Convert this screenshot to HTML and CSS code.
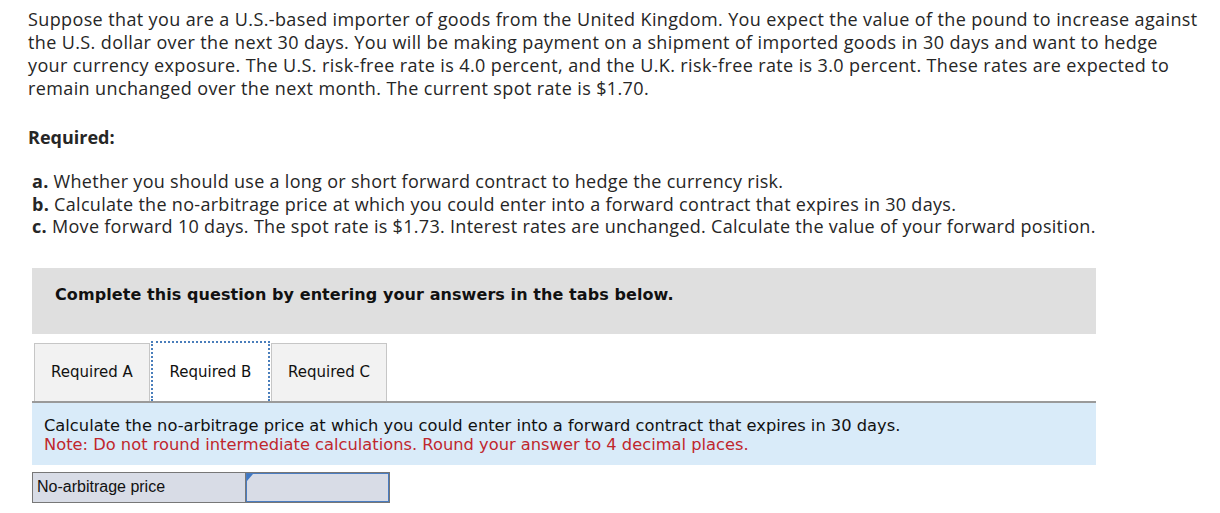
FILE: index.html
```html
<!DOCTYPE html>
<html>
<head>
<meta charset="utf-8">
<link rel="stylesheet" href="styles.css">
</head>
<body>
<div class="page">
  <p class="intro">Suppose that you are a U.S.-based importer of goods from the United Kingdom. You expect the value of the pound to increase against the U.S. dollar over the next 30 days. You will be making payment on a shipment of imported goods in 30 days and want to hedge your currency exposure. The U.S. risk-free rate is 4.0 percent, and the U.K. risk-free rate is 3.0 percent. These rates are expected to remain unchanged over the next month. The current spot rate is $1.70.</p>
  <p class="required">Required:</p>
  <ul class="reqlist">
    <li><b>a.</b> Whether you should use a long or short forward contract to hedge the currency risk.</li>
    <li><b>b.</b> Calculate the no-arbitrage price at which you could enter into a forward contract that expires in 30 days.</li>
    <li><b>c.</b> Move forward 10 days. The spot rate is $1.73. Interest rates are unchanged. Calculate the value of your forward position.</li>
  </ul>
  <div class="answer">
    <div class="banner">Complete this question by entering your answers in the tabs below.</div>
    <div class="tabs">
      <div class="tab">Required A</div>
      <div class="tab active">Required B</div>
      <div class="tab">Required C</div>
    </div>
    <div class="prompt">
      <div>Calculate the no-arbitrage price at which you could enter into a forward contract that expires in 30 days.</div>
      <div class="note">Note: Do not round intermediate calculations. Round your answer to 4 decimal places.</div>
    </div>
    <div class="row">
      <div class="label">No-arbitrage price</div>
      <div class="input"><span class="flag"></span></div>
    </div>
  </div>
</div>
</body>
</html>
```
FILE: styles.css
```css
html, body {
  margin: 0;
  padding: 0;
  background: #fff;
}
.page {
  padding: 8px 0 0 28px;
  font-family: "Open Sans", Lato, sans-serif;
  color: #262626;
}
.intro {
  margin: 0;
  width: 1172px;
  font-size: 18px;
  line-height: 23px;
  letter-spacing: 0.38px;
}
.required {
  margin: 26px 0 0 0;
  font-size: 18px;
  line-height: 22px;
  font-weight: bold;
}
.reqlist {
  list-style: none;
  margin: 22px 0 0 0;
  padding: 0 0 0 4px;
  font-size: 18px;
  line-height: 22.5px;
  letter-spacing: 0.3px;
}
.answer {
  margin: 30px 0 0 4px;
  width: 1064px;
  font-family: "DejaVu Sans", sans-serif;
}
.banner {
  background: #dfdfdf;
  height: 66px;
  box-sizing: border-box;
  padding: 17px 0 0 23px;
  font-size: 16px;
  line-height: 20px;
  font-weight: bold;
  letter-spacing: 0.08px;
  color: #111;
}
.tabs {
  display: flex;
  align-items: flex-end;
  gap: 1px;
  margin-top: 7px;
  padding-left: 2px;
  border-bottom: 2px solid #9a9a9a;
}
.tab {
  box-sizing: border-box;
  width: 116px;
  height: 58px;
  background: #f2f2f2;
  border: 1px solid #c6c6c6;
  border-bottom: none;
  display: flex;
  align-items: center;
  justify-content: center;
  font-size: 15px;
  color: #111;
}
.tab.active {
  width: 119px;
  height: 60px;
  background: #fff;
  border: 2px dotted #4a7ebb;
  border-bottom: none;
}
.prompt {
  background: #d9ebf9;
  padding: 13px 12px 11px 12px;
  font-size: 16.3px;
  line-height: 19px;
  color: #111;
}
.note {
  color: #c0272d;
}
.row {
  display: flex;
  margin-top: 7px;
  height: 31px;
  font-family: "Liberation Sans", Arial, sans-serif;
}
.label {
  box-sizing: border-box;
  width: 213px;
  background: #d8dce6;
  border: 1px solid #777;
  border-right: none;
  padding: 0 0 0 4px;
  display: flex;
  align-items: center;
  font-size: 16px;
  color: #111;
}
.input {
  position: relative;
  box-sizing: border-box;
  width: 145px;
  background: #d8dce6;
  border: 1px solid #777;
  box-shadow: inset 0 0 0 1px #4a7cc0;
}
.flag {
  position: absolute;
  left: 1px;
  top: 1px;
  width: 0;
  height: 0;
  border-top: 7px solid #3f78c4;
  border-right: 6px solid transparent;
}
```
